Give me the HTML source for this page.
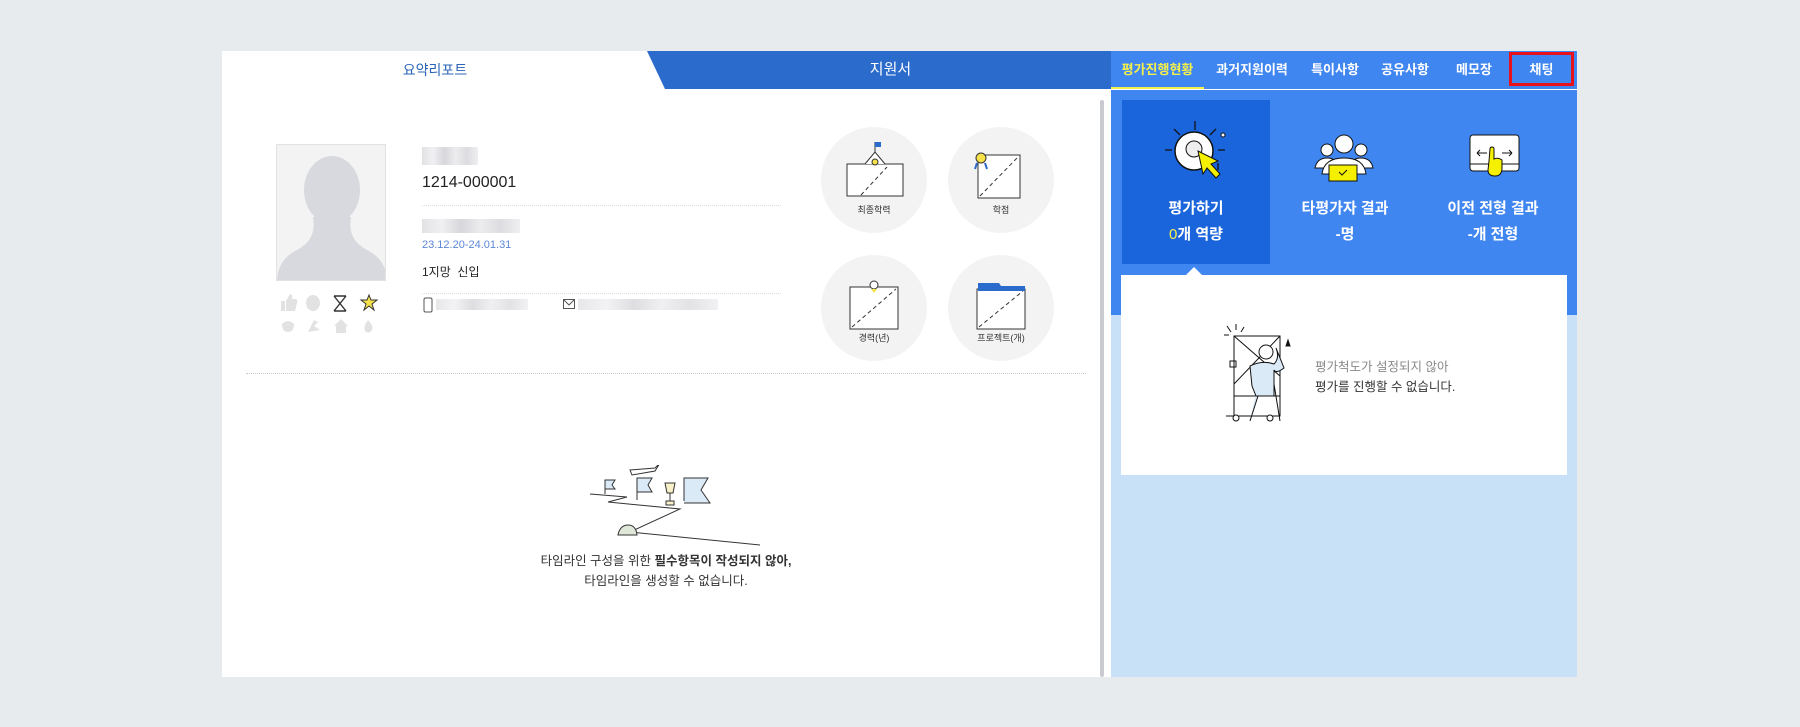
<!DOCTYPE html>
<html><head><meta charset="utf-8"><style>
*{margin:0;padding:0;box-sizing:border-box}
body{width:1800px;height:727px;background:#e8ebee;font-family:"Liberation Sans","Noto Sans CJK KR",sans-serif;position:relative;overflow:hidden}
.a{position:absolute}
.blur{background:linear-gradient(90deg,#cfcfd4,#e6e6ea 20%,#bdbdc4 40%,#e0e0e4 60%,#c6c6cc 80%,#e4e4e8);opacity:.8}
.circ{position:absolute;width:106px;height:106px;border-radius:50%;background:#f3f3f3}
.circ span{position:absolute;left:0;right:0;top:76px;text-align:center;font-size:9px;color:#333}
.tab{position:absolute;top:51px;height:38px;line-height:38px;color:#fff;font-size:13px;text-align:center;font-weight:bold}
</style></head><body>
<div class="a" style="left:222px;top:51px;width:889px;height:626px;background:#fff"></div>
<div class="a" style="left:222px;top:51px;width:426px;height:38px;line-height:38px;text-align:center;font-size:14px;color:#2a64b8">요약리포트</div>
<svg class="a" style="left:647px;top:51px" width="464" height="38"><polygon points="0,0 464,0 464,38 18,38" fill="#2b6bcc"/></svg>
<div class="a" style="left:670px;top:51px;width:441px;height:38px;line-height:38px;text-align:center;font-size:15px;color:#fff">지원서</div>
<div class="a" style="left:1100px;top:100px;width:4px;height:577px;background:#c8cad0;border-radius:2px"></div>
<div class="a" style="left:276px;top:144px;width:110px;height:137px;background:#f3f3f3;border:1px solid #e2e2e2;overflow:hidden">
<svg width="110" height="137"><ellipse cx="55" cy="45" rx="28" ry="34" fill="#d8d9de"/><path d="M36 72 Q40 95 20 105 Q0 115 0 137 L110 137 Q110 115 90 105 Q70 95 74 72 Z" fill="#d8d9de"/></svg></div>
<svg class="a" style="left:278px;top:292px" width="100" height="44">
<g fill="#e2e2e2"><path d="M3 9 H7 V19 H3 Z M8 9 L12 2 Q15 2 14 7 H18 Q20 8 19 11 L17 19 H8 Z"/><ellipse cx="35" cy="11" rx="7" ry="8"/><polygon points="91,3 93,8 99,8 94,12 96,18 91,14 86,18 88,12 83,8 89,8" fill="#f5e14a" stroke="#333" stroke-width="1"/>
<path d="M4 32 Q10 26 16 32 Q16 40 10 40 Q4 40 4 32 Z M10 25 V30"/><path d="M30 40 L36 28 L40 30 L36 34 L42 38 Z"/><polygon points="63,27 70,34 68,34 68,41 58,41 58,34 56,34"/><path d="M90 28 Q96 34 94 38 Q92 42 88 40 Q84 36 90 28 Z"/></g>
<path d="M56 4 L68 19 M68 4 L56 19 M56 19 L68 19 M56 4 L68 4" stroke="#333" stroke-width="1.4" fill="none"/></svg>
<div class="a blur" style="left:422px;top:147px;width:56px;height:18px;opacity:.6"></div>
<div class="a" style="left:422px;top:174px;font-size:16px;color:#222">1214-000001</div>
<div class="a" style="left:422px;top:205px;width:359px;border-top:1px dotted #ddd"></div>
<div class="a blur" style="left:422px;top:219px;width:98px;height:14px;opacity:.6"></div>
<div class="a" style="left:422px;top:239px;font-size:11px;color:#5b86d6">23.12.20-24.01.31</div>
<div class="a" style="left:422px;top:263px;font-size:12px;color:#222">1지망 &nbsp;신입</div>
<div class="a" style="left:422px;top:293px;width:359px;border-top:1px dotted #ddd"></div>
<svg class="a" style="left:423px;top:297px" width="12" height="16"><rect x="1" y="1" width="8" height="14" rx="1.5" fill="none" stroke="#555"/></svg>
<div class="a blur" style="left:436px;top:299px;width:92px;height:11px;opacity:.5"></div>
<svg class="a" style="left:563px;top:299px" width="12" height="10"><rect x=".5" y=".5" width="11" height="9" fill="none" stroke="#555"/><path d="M1 1 L6 6 L11 1" fill="none" stroke="#555"/></svg>
<div class="a blur" style="left:578px;top:299px;width:140px;height:11px;opacity:.5"></div>
<div class="circ" style="left:821px;top:127px"><svg width="106" height="106"><rect x="26" y="37" width="56" height="32" fill="#fff" stroke="#333"/><path d="M44 37 L54 25 L64 37" fill="#fff" stroke="#333"/><circle cx="54" cy="35" r="3" fill="#f5e14a" stroke="#333"/><path d="M54 25 V15" stroke="#333"/><rect x="54" y="15" width="6" height="5" fill="#2b6bcc"/><path d="M40 68 L66 40" stroke="#333" stroke-dasharray="4 3"/></svg><span>최종학력</span></div>
<div class="circ" style="left:948px;top:127px"><svg width="106" height="106"><rect x="30" y="28" width="42" height="43" fill="#fff" stroke="#333"/><path d="M32 69 L70 30" stroke="#333" stroke-dasharray="4 3"/><circle cx="33" cy="31" r="5" fill="#f5e14a" stroke="#333"/><path d="M29 36 L27 42 M37 36 L39 42" stroke="#2b6bcc" stroke-width="2"/></svg><span>학점</span></div>
<div class="circ" style="left:821px;top:255px"><svg width="106" height="106"><rect x="29" y="32" width="48" height="42" fill="#fff" stroke="#333"/><path d="M31 72 L75 34" stroke="#333" stroke-dasharray="4 3"/><circle cx="53" cy="30" r="4" fill="#fff" stroke="#333"/><polygon points="50,34 56,34 53,38" fill="#f5e14a"/></svg><span>경력(년)</span></div>
<div class="circ" style="left:948px;top:255px"><svg width="106" height="106"><rect x="29" y="34" width="48" height="40" fill="#fff" stroke="#333"/><path d="M30 28 H51 L53 31 H77 V36 H30 Z" fill="#2b6bcc"/><path d="M31 72 L75 36" stroke="#333" stroke-dasharray="4 3"/></svg><span>프로젝트(개)</span></div>
<div class="a" style="left:246px;top:373px;width:840px;border-top:1px dotted #ccc"></div>
<svg class="a" style="left:580px;top:465px" width="180" height="110" fill="none" stroke="#333" stroke-width="1">
<path d="M10 29 L47 32 L28 37 L100 44 L50 67 L190 81"/>
<path d="M25 29 V15 H35 L32 20 L35 24 H25" fill="#dbeaf7"/>
<path d="M57 35 V13 H72 L68 20 L72 27 H57" fill="#dbeaf7"/>
<path d="M104 36 V13 H128 L121 25 L130 38 H104" fill="#dbeaf7"/>
<path d="M85 18 H95 L93 28 H87 Z M90 28 V36 M86 36 H94 V40 H86 Z" fill="#f7f0c8"/>
<path d="M38 70 Q40 60 48 60 Q56 60 57 70 Z" fill="#dfe8d8"/>
<path d="M30 5 L55 3 L60 -2 L55 6 L32 10 Z" transform="translate(20,0)"/>
</svg>
<div class="a" style="left:466px;top:551px;width:400px;text-align:center;font-size:12.5px;line-height:20px;color:#333">타임라인 구성을 위한 <b>필수항목이 작성되지 않아,</b><br>타임라인을 생성할 수 없습니다.</div>
<div class="a" style="left:1111px;top:51px;width:466px;height:264px;background:#4086f1"></div>
<div class="a" style="left:1111px;top:315px;width:466px;height:362px;background:#c9e1f7"></div>
<div class="a" style="left:1111px;top:89px;width:466px;height:1px;background:#fff"></div>
<div class="a" style="left:1111px;top:87px;width:93px;height:2px;background:#f5f04a"></div>
<div class="tab" style="left:1111px;width:93px;color:#f5f04a">평가진행현황</div>
<div class="tab" style="left:1208px;width:88px">과거지원이력</div>
<div class="tab" style="left:1300px;width:70px">특이사항</div>
<div class="tab" style="left:1370px;width:70px">공유사항</div>
<div class="tab" style="left:1440px;width:68px">메모장</div>
<div class="a" style="left:1509px;top:52px;width:65px;height:34px;border:3px solid #e8121c"></div>
<div class="tab" style="left:1509px;width:65px">채팅</div>
<div class="a" style="left:1122px;top:100px;width:148px;height:164px;background:#1a64dc"></div>
<svg class="a" style="left:1160px;top:118px" width="75" height="70">
<path d="M35 3 V12 M14 11 L20 17 M56 11 L50 17 M5 32 H12 M58 32 H65 M58 45 V52" stroke="#111" stroke-width="1.3"/>
<circle cx="63" cy="17" r="2" fill="#fff" stroke="#111"/>
<circle cx="34" cy="33" r="19" fill="#fff" stroke="#111" stroke-width="1.5"/>
<circle cx="34" cy="31" r="8" fill="#eee" stroke="#111"/>
<polygon points="38,33 58,43 51,46 60,56 56,60 47,50 43,56" fill="#f5f000" stroke="#111"/>
</svg>
<svg class="a" style="left:1314px;top:128px" width="60" height="58">
<circle cx="13" cy="22" r="6" fill="#fff" stroke="#111"/><circle cx="47" cy="22" r="6" fill="#fff" stroke="#111"/>
<path d="M1 40 Q3 30 13 30 Q23 30 25 40 Z M35 40 Q37 30 47 30 Q57 30 59 40 Z" fill="#fff" stroke="#111"/>
<path d="M8 46 Q10 30 30 30 Q50 30 52 46 Z" fill="#fff" stroke="#111"/>
<circle cx="30" cy="16" r="9" fill="#fff" stroke="#111"/>
<rect x="15" y="37" width="28" height="16" fill="#f5f000" stroke="#111"/>
<path d="M25 44 L28 47 L33 42" stroke="#111" fill="none"/></svg>
<svg class="a" style="left:1468px;top:134px" width="52" height="50">
<rect x="2" y="1" width="49" height="36" rx="3" fill="#fff" stroke="#111"/><path d="M2 30 H51" stroke="#111"/>
<path d="M9 19 H19 M9 19 L12 16 M9 19 L12 22 M34 19 H44 M44 19 L41 16 M44 19 L41 22" stroke="#111"/>
<path d="M22 15 Q22 13 24 13 Q26 13 26 15 V25 Q30 23 34 26 V34 Q34 42 27 42 Q20 42 20 36 L21 27 Z" fill="#f5f000" stroke="#111"/></svg>
<div class="a" style="left:1122px;top:196px;width:148px;text-align:center;color:#fff;font-size:15px;line-height:26px;font-weight:bold">평가하기<br><span style="color:#f5f04a;font-weight:normal">0</span>개 역량</div>
<div class="a" style="left:1270px;top:196px;width:150px;text-align:center;color:#fff;font-size:15px;line-height:26px;font-weight:bold">타평가자 결과<br>-명</div>
<div class="a" style="left:1418px;top:196px;width:150px;text-align:center;color:#fff;font-size:15px;line-height:26px;font-weight:bold">이전 전형 결과<br>-개 전형</div>
<div class="a" style="left:1121px;top:275px;width:446px;height:200px;background:#fff"></div>
<svg class="a" style="left:1185px;top:265px" width="18" height="11"><polygon points="0,11 9,2 18,11" fill="#fff"/></svg>
<svg class="a" style="left:1222px;top:324px" width="80" height="105" fill="none" stroke="#111" stroke-width="1">
<rect x="12" y="12" width="46" height="80"/><path d="M12 12 L58 52 M58 12 L12 60 M12 72 H58"/>
<path d="M5 2 L9 8 M14 0 V6 M22 3 L19 8 M2 11 H7" />
<rect x="8" y="37" width="6" height="6"/>
<path d="M4 92 H58"/><circle cx="14" cy="94" r="3" fill="#fff"/><circle cx="48" cy="94" r="3" fill="#fff"/>
<path d="M40 40 Q30 44 34 72 L36 72 L28 97 M52 60 L58 97 M36 72 H52" fill="#dbeaf7"/>
<path d="M28 42 Q40 36 52 40 Q58 34 54 24 L62 44 Q54 50 52 46 V72 H34 L30 62 Z" fill="#dbeaf7"/>
<circle cx="44" cy="28" r="7" fill="#fff"/><path d="M66 16 L68 22 L64 22 Z" fill="#111"/></svg>
<div class="a" style="left:1315px;top:357px;font-size:12.5px;line-height:20px;color:#333"><span style="color:#888">평가척도가 설정되지 않아</span><br>평가를 진행할 수 없습니다.</div>
</body></html>
